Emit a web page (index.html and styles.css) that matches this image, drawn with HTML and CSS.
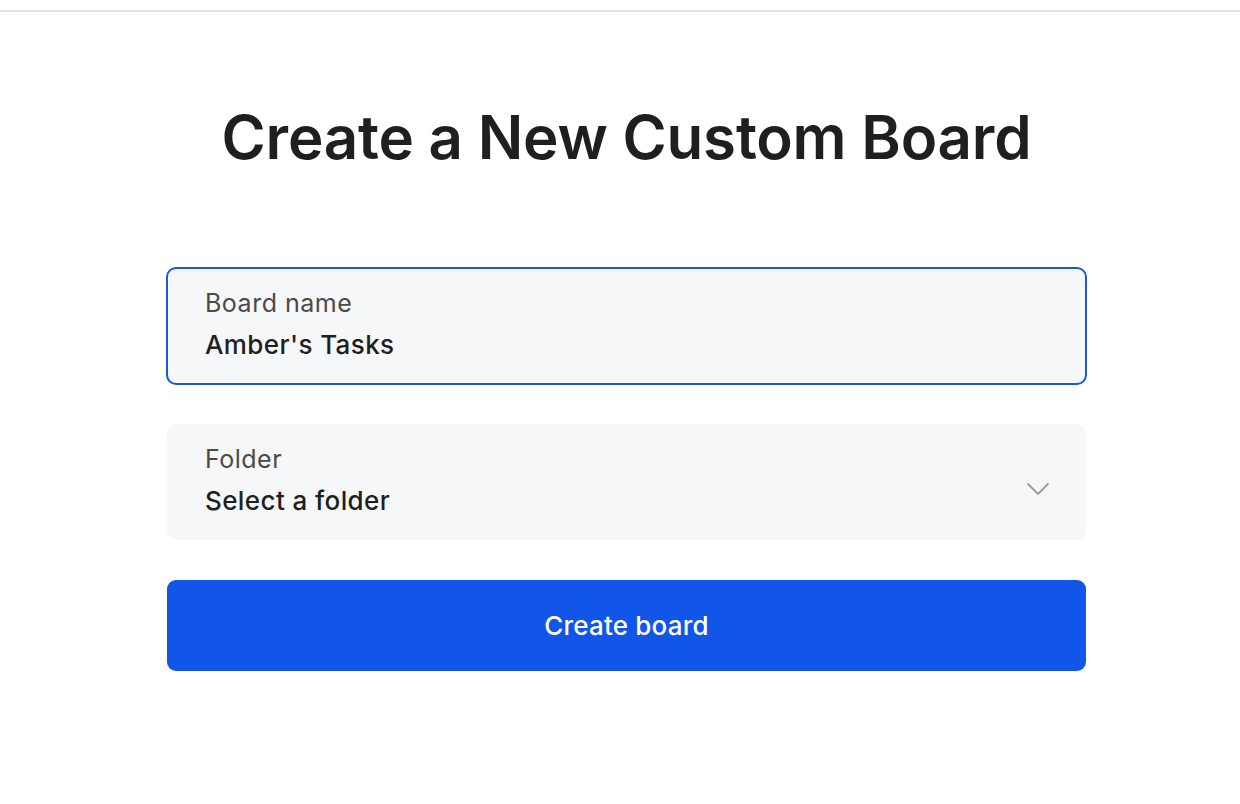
FILE: index.html
```html
<!DOCTYPE html>
<html>
<head>
<meta charset="utf-8">
<link rel="stylesheet" href="styles.css">
</head>
<body>
<div class="topbar"></div>
<main class="page">
  <h1 class="title">Create a New Custom Board</h1>
  <form class="form">
    <label class="field field-active">
      <span class="field-label">Board name</span>
      <span class="field-value">Amber's Tasks</span>
    </label>
    <div class="field field-select">
      <div class="field-text">
        <span class="field-label">Folder</span>
        <span class="field-value">Select a folder</span>
      </div>
      <svg class="chevron" width="24" height="14" viewBox="0 0 24 14"><path d="M1.5 1.5 L12 12 L22.5 1.5" fill="none" stroke="#9a9a9a" stroke-width="1.8"/></svg>
    </div>
    <button type="button" class="btn">Create board</button>
  </form>
</main>
</body>
</html>
```
FILE: styles.css
```css
* { box-sizing: border-box; }
html, body { margin: 0; padding: 0; background: #fff; }
body { font-family: "Inter", "Lato", sans-serif; color: #1f1f1f; }
.topbar { height: 12px; border-bottom: 2px solid #e3e3e3; }
.page { width: 921px; margin-left: 166px; display: flex; flex-direction: column; }
.title { margin: 89px 0 0; text-align: center; font-size: 60px; font-weight: 600; letter-spacing: -0.2px; line-height: 72px; color: #1f1f1f; }
.form { margin-top: 94px; display: flex; flex-direction: column; }
.field { display: flex; flex-direction: column; background: #f6f7f9; border-radius: 10px; padding: 21px 40px 0; height: 116px; }
.field-active { border: 2px solid #1a56e6; padding: 19px 37px 0; height: 118px; }
.field-select { margin: 39px 1px 0; flex-direction: row; justify-content: space-between; padding: 20px 36px 0 38px; height: 116px; align-items: flex-start; }
.field-text { display: flex; flex-direction: column; }
.field-label { font-size: 25px; line-height: 30px; color: #4a4a4a; font-weight: 400; letter-spacing: 0.5px; }
.field-value { font-size: 26px; line-height: 36px; margin-top: 9px; color: #1f1f1f; font-weight: 500; letter-spacing: 0.4px; }
.chevron { margin-top: 38px; }
.btn { margin: 40px 1px 0; height: 91px; background: #1155e9; border: none; border-radius: 9px; color: #fff; font-family: inherit; font-size: 26px; font-weight: 500; letter-spacing: 0.2px; }
```
